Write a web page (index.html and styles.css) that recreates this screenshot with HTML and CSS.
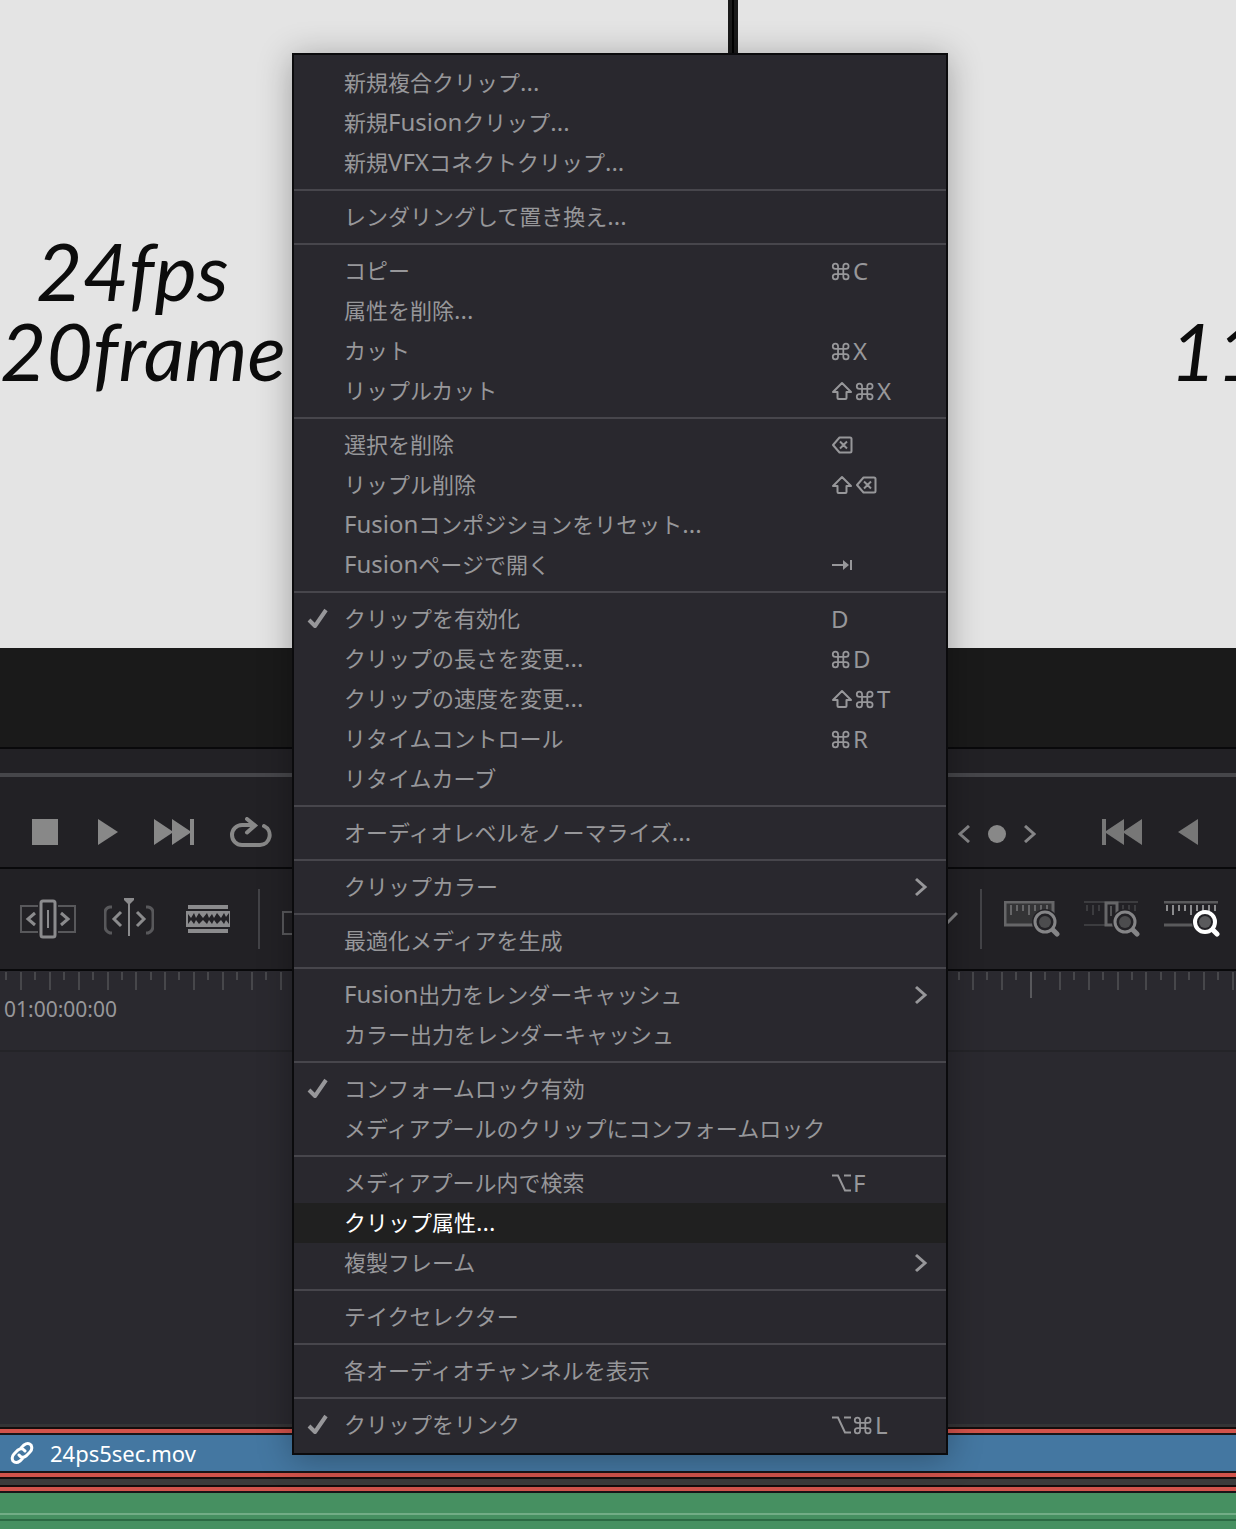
FILE: index.html
```html
<!DOCTYPE html>
<html lang="ja">
<head>
    <meta charset="UTF-8">
    <meta name="viewport" content="width=device-width, initial-scale=1.0">
    <title>Timeline</title>
    <link rel="stylesheet" href="styles.css">
</head>
<body>
    <!-- shared key symbols -->
    <svg class="defs" width="0" height="0" aria-hidden="true">
        <symbol id="cmd" viewBox="-1 -2 25 27">
            <path d="M7 9V6a3 3 0 1 0-3 3h12a3 3 0 1 0-3-3v12a3 3 0 1 0 3-3H4a3 3 0 1 0 3 3V9"/>
        </symbol>
        <symbol id="shift" viewBox="0 0 24 24">
            <path stroke-linejoin="round" d="M11 4L20 13h-4.500v6q0 1-1 1h-7q-1 0-1-1v-6H2z"/>
        </symbol>
        <symbol id="del" viewBox="0 0 24 24">
            <path stroke-linejoin="round" d="M8.500 4.500H19q1.500 0 1.500 1.500v12q0 1.500-1.500 1.500H8.500L2 12zM9 8.500l7 7M16 8.500l-7 7"/>
        </symbol>
        <symbol id="tab" viewBox="0 0 24 24">
            <path d="M1 12h13M20 7v10"/><path class="solid" stroke="none" d="M12 7l6 5-6 5z"/>
        </symbol>
        <symbol id="opt" viewBox="0 0 22 24">
            <path d="M1 4.500h6l7 15h6M13 4.500h7"/>
        </symbol>
        <symbol id="check" viewBox="0 0 24 24">
            <path stroke-linejoin="round" d="M3 13l6 6L20 3"/>
        </symbol>
        <symbol id="arrow" viewBox="0 0 14 20">
            <path d="M2 2l9 8-9 8"/>
        </symbol>
    </svg>

    <main class="viewer">
        <p class="caption"><span class="fps">24fps</span><span>20frame</span></p>
        <span class="divider-line"></span>
        <p class="caption right">11</p>
    </main>
    <div class="strip"></div>

    <section class="transport">
        <div class="scrub"></div>
        <div class="bar">
            <div class="group">
                <button aria-label="停止"><svg width="26" height="26"><path fill="#888" d="M0 0h26v26H0z"/></svg></button>
                <button aria-label="再生"><svg width="24" height="26"><path fill="#888" d="M4 0l20 13L4 26z"/></svg></button>
                <button aria-label="次のクリップ"><svg width="40" height="26"><path fill="#888" d="M0 0l18 12V0l18 12V0h4v26h-4V14L18 26V14L0 26z"/></svg></button>
                <button aria-label="ループ"><svg width="42" height="30"><path fill="none" stroke="#888" stroke-width="4" stroke-linecap="round" d="M24 8H12a10 10 0 0 0 0 20h18a10 10 0 0 0 4-19M17 2l8 6.500-8 7"/></svg></button>
            </div>
            <div class="group">
                <div class="keys">
                    <button aria-label="前のキーフレーム"><svg width="12" height="18"><path class="line" d="M11 1L2 9l9 8"/></svg></button>
                    <button aria-label="キーフレーム"><svg width="18" height="18"><circle cx="9" cy="9" r="9" fill="#888"/></svg></button>
                    <button aria-label="次のキーフレーム"><svg width="12" height="18"><path class="line" d="M1 1l9 8-9 8"/></svg></button>
                </div>
                <button aria-label="前のクリップ"><svg width="40" height="26"><path fill="#777" d="M40 0L22 12V0L4 12V0H0v26h4V14l18 12V14l18 12z"/></svg></button>
                <button aria-label="逆再生"><svg width="20" height="26"><path fill="#777" d="M20 0L0 13l20 13z"/></svg></button>
            </div>
        </div>
    </section>

    <section class="toolbar">
        <div class="tools">
            <button aria-label="トリム">
                <svg width="56" height="40" fill="none">
                    <path stroke="#58585b" stroke-width="2" d="M18 7H1v26h17M38 7h17v26H38"/>
                    <path stroke="#8b8b8d" stroke-width="3" d="M15 14l-7 6 7 6M41 14l7 6-7 6"/>
                    <path stroke="#8b8b8d" stroke-width="2" d="M28 11v18"/>
                    <rect x="21" y="2" width="14" height="36" rx="2" stroke="#8b8b8d" stroke-width="3"/>
                </svg>
            </button>
            <button aria-label="ダイナミックトリム">
                <svg width="50" height="42" fill="none">
                    <path stroke="#58585b" stroke-width="3" d="M8 9H6Q1 10 1 15v13q0 5 5 7h2M42 9h2q5 1 5 6v13q0 5-5 7h-2"/>
                    <path stroke="#8b8b8d" stroke-width="3" d="M17 14l-7 7 7 7M33 14l7 7-7 7"/>
                    <path stroke="#8b8b8d" stroke-width="2" d="M25 2v36"/>
                    <path fill="#8b8b8d" d="M20 0h10v2l-5 5-5-5z"/>
                </svg>
            </button>
            <button aria-label="ブレード">
                <svg width="48" height="28">
                    <path fill="#8b8b8d" d="M6 0h40v4H6zM6 24h40v4H6zM4 6h44v16H4z"/>
                    <path fill="#222125" d="M6 9l3 4 3-5 2 5 3-5 4 5 4-5 2 5 3-4 2 4 3-5 4 5 3-5 2 4 3-4v11l-3-4-2 4-3-4-4 4-3-4-2 4-3-4-2 4-4-4-4 4-3-4-2 4-3-4-3 4z"/>
                </svg>
            </button>
            <span class="split"></span>
            <button aria-label="挿入"><svg width="30" height="32"><path fill="none" stroke="#58585b" stroke-width="2" d="M1 9h28v22H1z"/></svg></button>
        </div>
        <div class="tools zooms">
            <button aria-label="マーカー"><svg width="24" height="16"><path class="line" d="M2 2l10 11L23 2"/></svg></button>
            <span class="split"></span>
            <button aria-label="全体表示">
                <svg width="56" height="36" fill="none">
                    <path fill="#343436" stroke="#666668" stroke-width="3" d="M1 1h48v23H1z"/>
                    <path stroke="#666668" stroke-width="2" d="M7 4v10M13 4v6M19 4v6M25 4v10M31 4v6M37 4v6M43 4v6"/>
                    <path stroke="#222125" stroke-width="10" d="M43 23l9 9"/><circle cx="41" cy="21" r="13" fill="#222125"/>
                    <circle cx="41" cy="21" r="6" fill="#4c4c4e"/><circle cx="41" cy="21" r="10" stroke="#858587" stroke-width="3"/>
                    <path stroke="#858587" stroke-width="5" stroke-linecap="round" d="M49 29l4 4"/>
                </svg>
            </button>
            <button aria-label="詳細ズーム">
                <svg width="56" height="36" fill="none">
                    <path stroke="#3c3c3f" stroke-width="2" d="M0 1h54M0 24h40M3 4v6M9 4v10M15 4v6M39 4v6M45 4v6M51 4v6"/>
                    <path fill="#222125" stroke="#666668" stroke-width="3" d="M22 2h11v22H22z"/><path stroke="#555557" stroke-width="2" d="M27 5v10"/>
                    <path stroke="#222125" stroke-width="10" d="M43 23l9 9"/><circle cx="41" cy="21" r="13" fill="#222125"/>
                    <circle cx="41" cy="21" r="6" fill="#4c4c4e"/><circle cx="41" cy="21" r="10" stroke="#858587" stroke-width="3"/>
                    <path stroke="#858587" stroke-width="5" stroke-linecap="round" d="M49 29l4 4"/>
                </svg>
            </button>
            <button aria-label="カスタムズーム">
                <svg width="56" height="36" fill="none">
                    <path stroke="#5a5a5c" stroke-width="3" d="M0 1h54M0 24h40"/>
                    <circle cx="41" cy="21" r="13" fill="#222125"/>
                    <path stroke="#8b8b8d" stroke-width="2" d="M3 4v6M9 4v10M15 4v6M21 4v6M27 4v10M33 4v6M39 4v6M45 4v6M51 4v6"/>
                    <circle cx="41" cy="21" r="10" fill="#222125" stroke="#fff" stroke-width="4"/>
                    <circle cx="41" cy="21" r="6" fill="#5a5a5c"/>
                    <path stroke="#fff" stroke-width="5" stroke-linecap="round" d="M49 29l4 4"/>
                </svg>
            </button>
        </div>
    </section>

    <section class="ruler">
        <svg class="ticks" width="100%" height="28">
            <defs>
                <pattern id="tick" x="20" width="202" height="28" patternUnits="userSpaceOnUse">
                    <path fill="#47474b" d="M0 1h2v18H0zM29 1h2v18h-2zM58 1h2v18h-2zM87 1h2v18h-2zM115 1h2v18h-2zM144 1h2v18h-2zM173 1h2v18h-2zM14 1h2v8h-2zM43 1h2v8h-2zM72 1h2v8h-2zM101 1h2v8h-2zM130 1h2v8h-2zM158 1h2v8h-2zM187 1h2v8h-2z"/>
                </pattern>
            </defs>
            <rect width="100%" height="28" fill="url(#tick)"/>
            <path fill="#58585c" d="M1030 1h2v26h-2z"/>
        </svg>
        <p class="timecode">01:00:00:00</p>
    </section>

    <section class="tracks"></section>
    <section class="clip video">
        <svg width="24" height="26" fill="none" stroke="#fff" stroke-width="3" stroke-linecap="round"><path d="M11 8l3-3q4-3 7 0 2 4-1 7l-4 4q-4 3-7-1M13 18l-3 3q-4 3-7 0-2-4 1-7l4-4q4-3 7 1"/></svg>
        <span>24ps5sec.mov</span>
    </section>
    <div class="gap"></div>
    <section class="clip audio"><span class="wave"></span></section>

    <nav class="menu">
        <button class="item"><span class="label">新規複合クリップ<span class="en">...</span></span></button>
        <button class="item"><span class="label">新規<span class="en">Fusion</span>クリップ<span class="en">...</span></span></button>
        <button class="item"><span class="label">新規<span class="en">VFX</span>コネクトクリップ<span class="en">...</span></span></button>
        <hr>
        <button class="item"><span class="label">レンダリングして置き換え<span class="en">...</span></span></button>
        <hr>
        <button class="item"><span class="label">コピー</span><span class="key"><svg class="k"><use href="#cmd"/></svg>C</span></button>
        <button class="item"><span class="label">属性を削除<span class="en">...</span></span></button>
        <button class="item"><span class="label">カット</span><span class="key"><svg class="k"><use href="#cmd"/></svg>X</span></button>
        <button class="item"><span class="label">リップルカット</span><span class="key"><svg class="k wide"><use href="#shift"/></svg><svg class="k"><use href="#cmd"/></svg>X</span></button>
        <hr>
        <button class="item"><span class="label">選択を削除</span><span class="key"><svg class="k wide"><use href="#del"/></svg></span></button>
        <button class="item"><span class="label">リップル削除</span><span class="key"><svg class="k wide"><use href="#shift"/></svg><svg class="k wide"><use href="#del"/></svg></span></button>
        <button class="item"><span class="label"><span class="en">Fusion</span>コンポジションをリセット<span class="en">...</span></span></button>
        <button class="item"><span class="label"><span class="en">Fusion</span>ページで開く</span><span class="key"><svg class="k wide"><use href="#tab"/></svg></span></button>
        <hr>
        <button class="item"><svg class="check"><use href="#check"/></svg><span class="label">クリップを有効化</span><span class="key">D</span></button>
        <button class="item"><span class="label">クリップの長さを変更<span class="en">...</span></span><span class="key"><svg class="k"><use href="#cmd"/></svg>D</span></button>
        <button class="item"><span class="label">クリップの速度を変更<span class="en">...</span></span><span class="key"><svg class="k wide"><use href="#shift"/></svg><svg class="k"><use href="#cmd"/></svg>T</span></button>
        <button class="item"><span class="label">リタイムコントロール</span><span class="key"><svg class="k"><use href="#cmd"/></svg>R</span></button>
        <button class="item"><span class="label">リタイムカーブ</span></button>
        <hr>
        <button class="item"><span class="label">オーディオレベルをノーマライズ<span class="en">...</span></span></button>
        <hr>
        <button class="item"><span class="label">クリップカラー</span><svg class="arrow"><use href="#arrow"/></svg></button>
        <hr>
        <button class="item"><span class="label">最適化メディアを生成</span></button>
        <hr>
        <button class="item"><span class="label"><span class="en">Fusion</span>出力をレンダーキャッシュ</span><svg class="arrow"><use href="#arrow"/></svg></button>
        <button class="item"><span class="label">カラー出力をレンダーキャッシュ</span></button>
        <hr>
        <button class="item"><svg class="check"><use href="#check"/></svg><span class="label">コンフォームロック有効</span></button>
        <button class="item"><span class="label">メディアプールのクリップにコンフォームロック</span></button>
        <hr>
        <button class="item"><span class="label">メディアプール内で検索</span><span class="key"><svg class="k"><use href="#opt"/></svg>F</span></button>
        <button class="item active"><span class="label">クリップ属性<span class="en">...</span></span></button>
        <button class="item"><span class="label">複製フレーム</span><svg class="arrow"><use href="#arrow"/></svg></button>
        <hr>
        <button class="item"><span class="label">テイクセレクター</span></button>
        <hr>
        <button class="item"><span class="label">各オーディオチャンネルを表示</span></button>
        <hr>
        <button class="item"><svg class="check"><use href="#check"/></svg><span class="label">クリップをリンク</span><span class="key"><svg class="k"><use href="#opt"/></svg><svg class="k"><use href="#cmd"/></svg>L</span></button>
    </nav>
</body>
</html>
```
FILE: styles.css
```css
* {
    margin: 0;
    padding: 0;
    box-sizing: border-box;
}
body {
    position: relative;
    display: flex;
    flex-direction: column;
    min-height: 100vh;
    overflow-x: hidden;
    background-color: #2a292f;
    color: #97979a;
    font-family: "Noto Sans", "Noto Sans CJK JP", sans-serif;
    font-size: 22px;
}
button {
    display: block;
    border: none;
    background: none;
    color: inherit;
    font: inherit;
    cursor: pointer;
}
svg {
    display: block;
    flex: none;
}
.defs {
    position: absolute;
}
.line {
    fill: none;
    stroke: #858587;
    stroke-width: 3;
}

/* viewer */
.viewer {
    display: flex;
    justify-content: space-between;
    height: 648px;
    background-color: #e4e4e4;
    overflow: hidden;
}
.caption {
    width: 320px;
    padding-top: 230px;
    color: #0c0c0c;
    font-family: Lato, sans-serif;
    font-size: 80px;
    font-style: italic;
    line-height: 80px;
}
.caption span {
    display: block;
}
.caption .fps {
    padding-left: 36px;
}
.caption.right {
    width: 66px;
    padding-top: 310px;
}
.divider-line {
    width: 10px;
    margin-left: 408px;
    margin-right: auto;
    border: solid #1a1a1a;
    border-width: 0 4px;
    background-color: #000;
}
.strip {
    height: 99px;
    background-color: #1a1a1a;
}

/* transport */
.transport {
    height: 120px;
    padding-top: 24px;
    border-top: 2px solid #09090b;
    background-color: #222125;
}
.scrub {
    height: 4px;
    background-color: #46464a;
}
.bar,
.toolbar {
    display: flex;
    justify-content: space-between;
    align-items: center;
}
.bar {
    height: 110px;
    padding: 0 38px 0 32px;
}
.group {
    display: flex;
    align-items: center;
    gap: 36px;
}
.keys {
    display: flex;
    gap: 18px;
    padding-top: 4px;
    margin-right: 30px;
}

/* toolbar */
.toolbar {
    height: 102px;
    padding: 0 16px 0 20px;
    border-top: 2px solid #09090b;
    background-color: #222125;
}
.tools {
    display: flex;
    align-items: center;
    gap: 28px;
}
.zooms {
    gap: 24px;
}
.split {
    width: 2px;
    height: 60px;
    margin-right: -6px;
    background-color: #434347;
}
.zooms .split {
    margin: 0 -2px;
}

/* timeline */
.ruler {
    height: 83px;
    border-top: 2px solid #09090b;
    border-bottom: 2px solid #242428;
}
.timecode {
    padding-left: 4px;
    font-size: 21px;
    line-height: 20px;
}
.tracks {
    flex: 1;
    border-bottom: 3px solid #343436;
}
.clip {
    border: solid #150d0d;
    border-width: 2px 0;
}
.video {
    display: flex;
    align-items: center;
    gap: 16px;
    height: 52px;
    padding-left: 10px;
    background: linear-gradient(#d1534b 4px, #191518 4px 6px, #4477a1 6px 42px, #191518 42px 44px, #d1534b 44px);
    color: #fff;
}
.gap {
    height: 6px;
    background-color: #3b3b3b;
}
.audio {
    height: 44px;
    border-bottom: none;
    background: linear-gradient(#d1534b 4px, #191518 4px 6px, #469061 6px);
}
.wave {
    display: block;
    height: 8px;
    margin-top: 26px;
    border-top: 2px solid #72ad86;
    border-bottom: 2px solid #2c6a44;
}

/* context menu */
.menu {
    position: absolute;
    top: 53px;
    left: 292px;
    width: 656px;
    padding: 8px 0;
    border: 2px solid #0b0b0d;
    background-color: #29282e;
    box-shadow: 0 4px 32px rgba(0, 0, 0, 0.3);
}
.menu hr {
    height: 2px;
    margin: 6px 0;
    border: none;
    background-color: #47464c;
}
.item {
    display: grid;
    grid-template-columns: 50px 1fr 115px;
    align-items: center;
    width: 100%;
    height: 40px;
    line-height: 36px;
    text-align: left;
}
.label {
    grid-column: 2;
    padding-bottom: 4px;
    white-space: nowrap;
    font-family: "Noto Sans CJK JP", sans-serif;
}
.en {
    font-family: "Noto Sans", sans-serif;
    font-size: 24px;
    line-height: 24px;
}
.key {
    display: flex;
    align-items: center;
    grid-column: 3;
    font-size: 24px;
}
.k,
.check,
.arrow {
    fill: none;
    stroke: #97979a;
    stroke-width: 2;
}
.k {
    width: 22px;
    height: 24px;
}
.wide {
    width: 24px;
}
.solid {
    fill: #97979a;
}
.check {
    width: 24px;
    height: 24px;
    margin-left: 12px;
    stroke-width: 4;
}
.arrow {
    grid-column: 3;
    justify-self: end;
    width: 14px;
    height: 20px;
    margin-right: 18px;
    stroke-width: 3;
}
.active {
    background-color: #202020;
    color: #fff;
}
```
